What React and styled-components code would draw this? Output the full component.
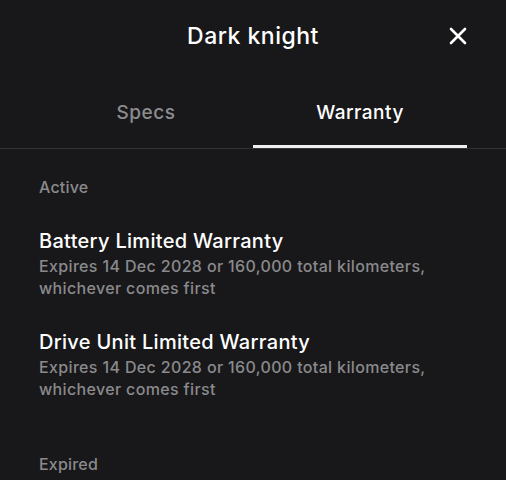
import React from 'react'
import styled, { createGlobalStyle } from 'styled-components'

const GlobalStyle = createGlobalStyle`
    html, body {
        margin: 0;
        padding: 0;
        background: #18181a;
    }
    body {
        font-family: Inter, "Open Sans", sans-serif;
        -webkit-font-smoothing: antialiased;
    }
`

const warranties = [
    {
        title: 'Battery Limited Warranty',
        detail: 'Expires 14 Dec 2028 or 160,000 total kilometers, whichever comes first',
    },
    {
        title: 'Drive Unit Limited Warranty',
        detail: 'Expires 14 Dec 2028 or 160,000 total kilometers, whichever comes first',
    },
]

function CloseIcon() {
    return (
        <svg width="20" height="20" viewBox="0 0 20 20" fill="none">
            <path d="M3 3L17 17M17 3L3 17" stroke="#fff" strokeWidth="2.6" strokeLinecap="round" />
        </svg>
    )
}

function App() {
    return (
        <Screen>
            <GlobalStyle />
            <Header>
                <Title>Dark knight</Title>
                <CloseButton aria-label="Close">
                    <CloseIcon />
                </CloseButton>
            </Header>

            <Tabs>
                <Tab>Specs</Tab>
                <Tab active>Warranty</Tab>
            </Tabs>

            <Content>
                <SectionLabel>Active</SectionLabel>
                {warranties.map((w) => (
                    <Item key={w.title}>
                        <ItemTitle>{w.title}</ItemTitle>
                        <ItemDetail>{w.detail}</ItemDetail>
                    </Item>
                ))}
                <SectionLabel expired>Expired</SectionLabel>
            </Content>
        </Screen>
    )
}

export default App

const Screen = styled.div`
    width: 506px;
    height: 480px;
    overflow: hidden;
    background: #18181a;
    color: #fff;
`

const Header = styled.div`
    position: relative;
    height: 72px;
    display: flex;
    align-items: center;
    justify-content: center;
`

const Title = styled.h1`
    margin: 0;
    font-size: 23px;
    font-weight: 500;
    letter-spacing: 0.5px;
`

const CloseButton = styled.button`
    position: absolute;
    right: 38px;
    top: 26px;
    padding: 0;
    border: none;
    background: none;
    display: grid;
    place-items: center;
    cursor: pointer;
`

const Tabs = styled.div`
    display: grid;
    grid-template-columns: 1fr 1fr;
    padding: 0 39px;
    border-bottom: 1px solid #333336;
`

const Tab = styled.div`
    height: 76px;
    display: flex;
    align-items: center;
    justify-content: center;
    box-sizing: border-box;
    padding-top: 8px;
    font-size: 19px;
    font-weight: 500;
    letter-spacing: 0.5px;
    color: ${(p) => (p.active ? '#fff' : '#8c8c8e')};
    border-bottom: 3px solid ${(p) => (p.active ? '#eeeeee' : 'transparent')};
`

const Content = styled.div`
    padding: 28px 39px 0;
`

const SectionLabel = styled.div`
    font-size: 16px;
    font-weight: 500;
    letter-spacing: 0.2px;
    color: #8a8a8c;
    margin-top: ${(p) => (p.expired ? '54px' : '0')};
    margin-bottom: ${(p) => (p.expired ? '0' : '31px')};
`

const Item = styled.div`
    margin-bottom: 30px;
`

const ItemTitle = styled.div`
    font-size: 20px;
    font-weight: 500;
    letter-spacing: 0.3px;
    color: #fff;
    line-height: 27px;
`

const ItemDetail = styled.div`
    font-size: 16px;
    font-weight: 500;
    letter-spacing: 0.35px;
    line-height: 22px;
    color: #8a8a8c;
    max-width: 430px;
`
